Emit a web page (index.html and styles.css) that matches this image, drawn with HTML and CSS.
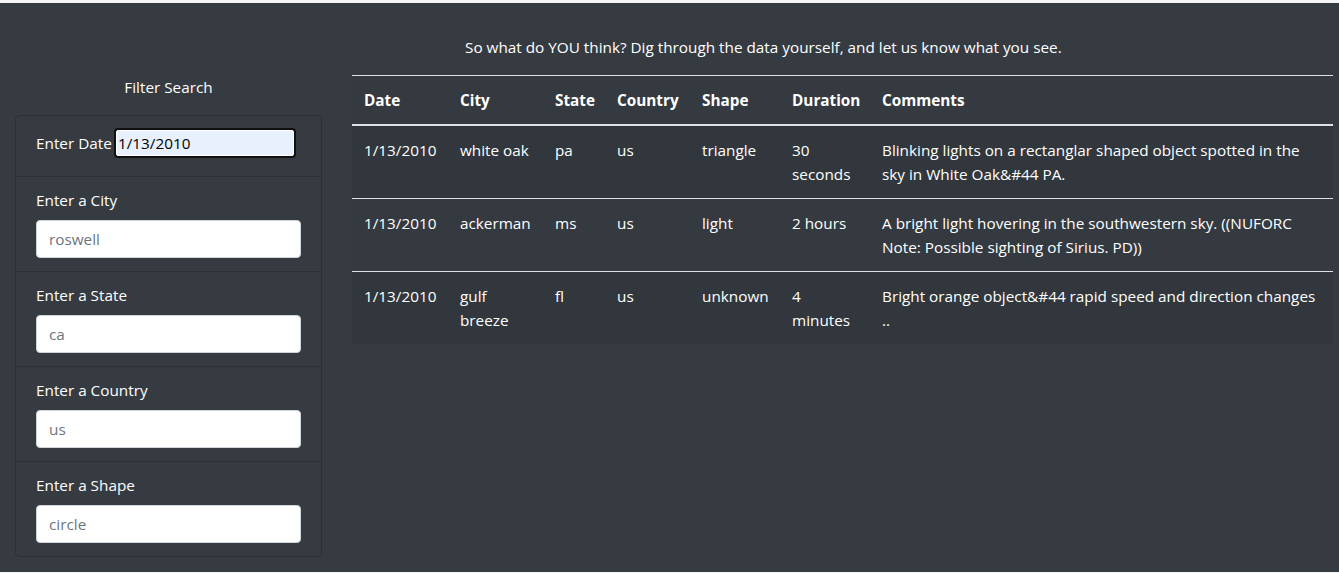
FILE: index.html
```html
<!DOCTYPE html>
<html lang="en">
<head>
<meta charset="utf-8">
<title>UFO Sightings</title>
<link rel="stylesheet" href="styles.css">
</head>
<body>
<div class="page">
  <aside class="sidebar">
    <h2 class="filter-title">Filter Search</h2>
    <ul class="filters">
      <li class="filter filter-inline">
        <label for="datetime">Enter Date</label>
        <input id="datetime" class="date-input" type="text" value="1/13/2010">
      </li>
      <li class="filter">
        <label for="city">Enter a City</label>
        <input id="city" class="form-control" type="text" placeholder="roswell">
      </li>
      <li class="filter">
        <label for="state">Enter a State</label>
        <input id="state" class="form-control" type="text" placeholder="ca">
      </li>
      <li class="filter">
        <label for="country">Enter a Country</label>
        <input id="country" class="form-control" type="text" placeholder="us">
      </li>
      <li class="filter">
        <label for="shape">Enter a Shape</label>
        <input id="shape" class="form-control" type="text" placeholder="circle">
      </li>
    </ul>
  </aside>
  <main class="content">
    <p class="intro-tail">occurred and when.</p>
    <p class="prompt">So what do YOU think? Dig through the data yourself, and let us know what you see.</p>
    <table class="sightings">
      <colgroup>
        <col class="c-date"><col class="c-city"><col class="c-state"><col class="c-country"><col class="c-shape"><col class="c-duration"><col>
      </colgroup>
      <thead>
        <tr><th>Date</th><th>City</th><th>State</th><th>Country</th><th>Shape</th><th>Duration</th><th>Comments</th></tr>
      </thead>
      <tbody>
        <tr><td>1/13/2010</td><td>white oak</td><td>pa</td><td>us</td><td>triangle</td><td>30 seconds</td><td>Blinking lights on a rectanglar shaped object spotted in the sky in White Oak&amp;#44 PA.</td></tr>
        <tr><td>1/13/2010</td><td>ackerman</td><td>ms</td><td>us</td><td>light</td><td>2 hours</td><td>A bright light hovering in the southwestern sky. ((NUFORC Note: Possible sighting of Sirius. PD))</td></tr>
        <tr><td>1/13/2010</td><td>gulf breeze</td><td>fl</td><td>us</td><td>unknown</td><td>4 minutes</td><td>Bright orange object&amp;#44 rapid speed and direction changes ..</td></tr>
      </tbody>
    </table>
  </main>
</div>
</body>
</html>
```
FILE: styles.css
```css
html, body {
  margin: 0;
  padding: 0;
}
body {
  background: #f4f5f6;
  font-family: "Open Sans", "Noto Sans", sans-serif;
  font-size: 15.3px;
  line-height: 24px;
  color: #fff;
}
.page {
  margin-top: 3px;
  height: 569px;
  overflow: hidden;
  background: #363b42;
  display: flex;
  align-items: flex-start;
}
.sidebar {
  flex: none;
  width: 307px;
  margin-left: 15px;
}
.filter-title {
  margin: 72px 0 16px;
  font-size: 15.3px;
  font-weight: 400;
  line-height: 24px;
  text-align: center;
}
.filters {
  list-style: none;
  margin: 0;
  padding: 0;
  border: 1px solid rgba(0, 0, 0, 0.16);
  border-radius: 4px;
}
.filter {
  padding: 11px 20px 13px;
  border-top: 1px solid rgba(0, 0, 0, 0.16);
}
.filter:first-child {
  border-top: 0;
}
.filter label {
  display: block;
  margin-bottom: 8px;
}
.filter-inline {
  display: flex;
  align-items: center;
  padding: 11px 20px 18px;
  height: 31px;
}
.filter-inline label {
  margin: 0;
  width: 78px;
  flex: none;
}
.filter-inline .date-input {
  margin-left: 2px;
}
.date-input {
  box-sizing: border-box;
  width: 178px;
  height: 26px;
  padding: 0 1px;
  border: 1px solid #fff;
  border-radius: 2px;
  box-shadow: 0 0 0 2px #101010;
  background: #e8f0fe;
  color: #000;
  font-family: inherit;
  font-size: 15.3px;
  outline: none;
}
.form-control {
  display: block;
  box-sizing: border-box;
  width: 100%;
  height: 38px;
  padding: 6px 12px;
  border: 1px solid #ced4da;
  border-radius: 4px;
  background: #fff;
  color: #495057;
  font-family: inherit;
  font-size: 15.3px;
  line-height: 24px;
}
.form-control::placeholder {
  color: #6c757d;
  opacity: 1;
}
.content {
  flex: none;
  width: 981px;
  margin-left: 30px;
}
.intro-tail {
  margin: -18px 0 26px 113px;
}
.prompt {
  margin: 0 0 16px 113px;
}
.sightings {
  width: 100%;
  border-collapse: collapse;
  table-layout: fixed;
  background: #343a40;
}
.c-date { width: 96px; }
.c-city { width: 95px; }
.c-state { width: 62px; }
.c-country { width: 85px; }
.c-shape { width: 90px; }
.c-duration { width: 90px; }
.sightings th,
.sightings td {
  padding: 12px;
  text-align: left;
  vertical-align: top;
  border-top: 1px solid #dee2e6;
}
.sightings thead th {
  font-weight: 700;
  border-bottom: 2px solid #dee2e6;
}
.sightings tbody tr:nth-child(odd) {
  background: rgba(0, 0, 0, 0.05);
}
```
